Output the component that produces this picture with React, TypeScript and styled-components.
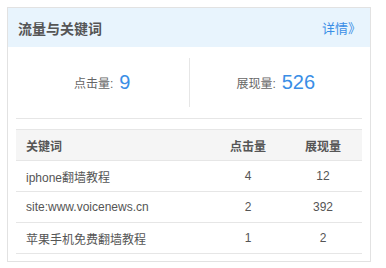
import { createGlobalStyle, styled } from 'styled-components';

const GlobalStyle = createGlobalStyle`
  body {
    margin: 0;
    padding: 7px;
    background: #fff;
    font-family: "Liberation Sans", "Noto Sans CJK SC", sans-serif;
    color: #555;
  }
`;

const Card = styled.div`
  width: 362px;
  height: 253px;
  border: 1px solid #e2e2e2;
  background: #fff;
`;

const Header = styled.div`
  height: 39px;
  display: flex;
  align-items: center;
  justify-content: space-between;
  padding: 0 9px 0 10px;
  background: #e8f4fd;
`;

const Title = styled.h3`
  margin: 0;
  font-size: 14px;
  font-weight: bold;
  color: #555;
`;

const More = styled.a`
  font-size: 13px;
  color: #3a8ee6;
  text-decoration: none;
`;

const Stats = styled.div`
  margin: 0 8px;
  height: 71px;
  display: flex;
  align-items: center;
  border-bottom: 1px solid #e6e6e6;
`;

const Stat = styled.div<{ $divider?: boolean }>`
  flex: 1;
  height: 49px;
  display: flex;
  align-items: center;
  justify-content: center;
  gap: 6px;
  border-left: ${(p) => (p.$divider ? '1px solid #e6e6e6' : 'none')};
`;

const StatLabel = styled.span`
  font-size: 12px;
  color: #666;
`;

const StatValue = styled.span`
  font-size: 20px;
  color: #3a8ee6;
`;

const Table = styled.table`
  margin: 10px 8px 0;
  width: 346px;
  border-collapse: collapse;
  font-size: 12px;
`;

const Th = styled.th<{ $align?: string }>`
  height: 30px;
  padding: 0 10px;
  background: #f5f5f5;
  border-top: 1px solid #e6e6e6;
  border-bottom: 1px solid #e6e6e6;
  text-align: ${(p) => p.$align || 'center'};
  font-weight: bold;
  color: #555;
`;

const Td = styled.td<{ $align?: string }>`
  height: 30px;
  padding: 0 10px;
  border-bottom: 1px solid #e6e6e6;
  text-align: ${(p) => p.$align || 'center'};
  color: #555;
`;

const rows = [
  { word: 'iphone翻墙教程', clicks: 4, views: 12 },
  { word: 'site:www.voicenews.cn', clicks: 2, views: 392 },
  { word: '苹果手机免费翻墙教程', clicks: 1, views: 2 },
];

export default function App() {
  return (
    <>
      <GlobalStyle />
      <Card>
        <Header>
          <Title>流量与关键词</Title>
          <More href="#">详情》</More>
        </Header>
        <Stats>
          <Stat>
            <StatLabel>点击量:</StatLabel>
            <StatValue>9</StatValue>
          </Stat>
          <Stat $divider>
            <StatLabel>展现量:</StatLabel>
            <StatValue>526</StatValue>
          </Stat>
        </Stats>
        <Table>
          <colgroup>
            <col />
            <col style={{ width: 72 }} />
            <col style={{ width: 78 }} />
          </colgroup>
          <thead>
            <tr>
              <Th $align="left">关键词</Th>
              <Th>点击量</Th>
              <Th>展现量</Th>
            </tr>
          </thead>
          <tbody>
            {rows.map((r) => (
              <tr key={r.word}>
                <Td $align="left">{r.word}</Td>
                <Td>{r.clicks}</Td>
                <Td>{r.views}</Td>
              </tr>
            ))}
          </tbody>
        </Table>
      </Card>
    </>
  );
}
